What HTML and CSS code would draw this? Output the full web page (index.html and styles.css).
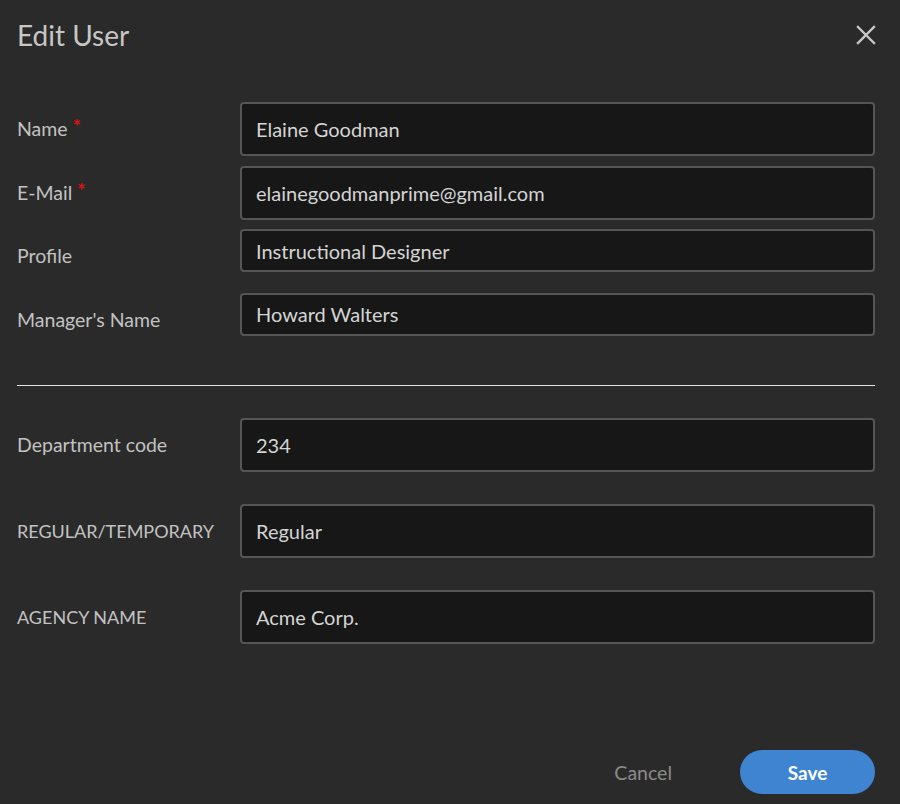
FILE: index.html
```html
<!DOCTYPE html>
<html lang="en">
<head>
<meta charset="utf-8">
<title>Edit User</title>
<link rel="stylesheet" href="styles.css">
</head>
<body>
<div class="dialog">
  <header class="head">
    <h1 class="title">Edit User</h1>
    <button class="close" aria-label="Close">
      <svg viewBox="0 0 20 20" width="20" height="20"><path d="M2 2 L18 18 M18 2 L2 18" stroke="#c8c8c8" stroke-width="2.4" stroke-linecap="square" fill="none"/></svg>
    </button>
  </header>

  <section class="group top">
    <div class="row">
      <label class="lbl">Name <span class="req">*</span></label>
      <div class="field tall">Elaine Goodman</div>
    </div>
    <div class="row">
      <label class="lbl">E-Mail <span class="req">*</span></label>
      <div class="field tall">elainegoodmanprime@gmail.com</div>
    </div>
    <div class="row">
      <label class="lbl">Profile</label>
      <div class="field short">Instructional Designer</div>
    </div>
    <div class="row">
      <label class="lbl">Manager's Name</label>
      <div class="field short">Howard Walters</div>
    </div>
  </section>

  <hr class="sep">

  <section class="group bottom">
    <div class="row">
      <label class="lbl">Department code</label>
      <div class="field tall">234</div>
    </div>
    <div class="row">
      <label class="lbl caps">REGULAR/TEMPORARY</label>
      <div class="field tall">Regular</div>
    </div>
    <div class="row">
      <label class="lbl caps">AGENCY NAME</label>
      <div class="field tall">Acme Corp.</div>
    </div>
  </section>

  <footer class="foot">
    <button class="cancel">Cancel</button>
    <button class="save">Save</button>
  </footer>
</div>
</body>
</html>
```
FILE: styles.css
```css
html, body {
  margin: 0;
  padding: 0;
  background: #2a2a2a;
}
body {
  font-family: Lato, "Liberation Sans", sans-serif;
  color: #c4c4c4;
}
.dialog {
  width: 900px;
  height: 804px;
  box-sizing: border-box;
  padding: 0 25px 0 17px;
  display: flex;
  flex-direction: column;
}
.head {
  height: 70px;
  display: flex;
  align-items: flex-start;
  justify-content: space-between;
}
.title {
  margin: 0;
  padding-top: 18px;
  font-size: 28px;
  line-height: 34px;
  font-weight: 400;
  color: #c6c6c6;
}
.close {
  margin: 25px -1px 0 0;
  padding: 0;
  border: 0;
  background: none;
  width: 20px;
  height: 20px;
  cursor: pointer;
}
.close svg { display: block; }
.group {
  display: flex;
  flex-direction: column;
}
.top {
  margin-top: 32px;
  gap: 9.5px;
}
.bottom {
  gap: 32px;
}
.row {
  display: grid;
  grid-template-columns: 223px 1fr;
  align-items: start;
  height: 54px;
}
.lbl {
  align-self: center;
  font-size: 19.5px;
  line-height: 24px;
  color: #c2c2c2;
  white-space: nowrap;
}
.lbl.caps {
  font-size: 18px;
}
.req {
  color: #e01010;
  font-size: 19px;
  font-weight: 700;
  vertical-align: 3px;
  line-height: 0;
}
.field {
  box-sizing: border-box;
  background: #171717;
  border: 2px solid #555555;
  border-radius: 4px;
  padding: 0 14px;
  display: flex;
  align-items: center;
  font-size: 20px;
  color: #d4d4d4;
}
.field.tall { height: 54px; }
.field.short { height: 43px; }
.sep {
  margin: 38px 0 32px 0;
  border: 0;
  border-top: 1.5px solid #e6e6e6;
  height: 0;
}
.foot {
  margin-top: auto;
  margin-bottom: 10px;
  display: flex;
  justify-content: flex-end;
  align-items: center;
  gap: 38px;
}
.cancel {
  background: none;
  border: 0;
  padding: 0 30px;
  font-family: inherit;
  font-size: 19.5px;
  color: #8a8a8a;
  cursor: pointer;
}
.save {
  width: 135px;
  height: 44px;
  border: 0;
  border-radius: 22px;
  background: #3f84d1;
  color: #ffffff;
  font-family: inherit;
  font-size: 19px;
  font-weight: 700;
  cursor: pointer;
}
```
